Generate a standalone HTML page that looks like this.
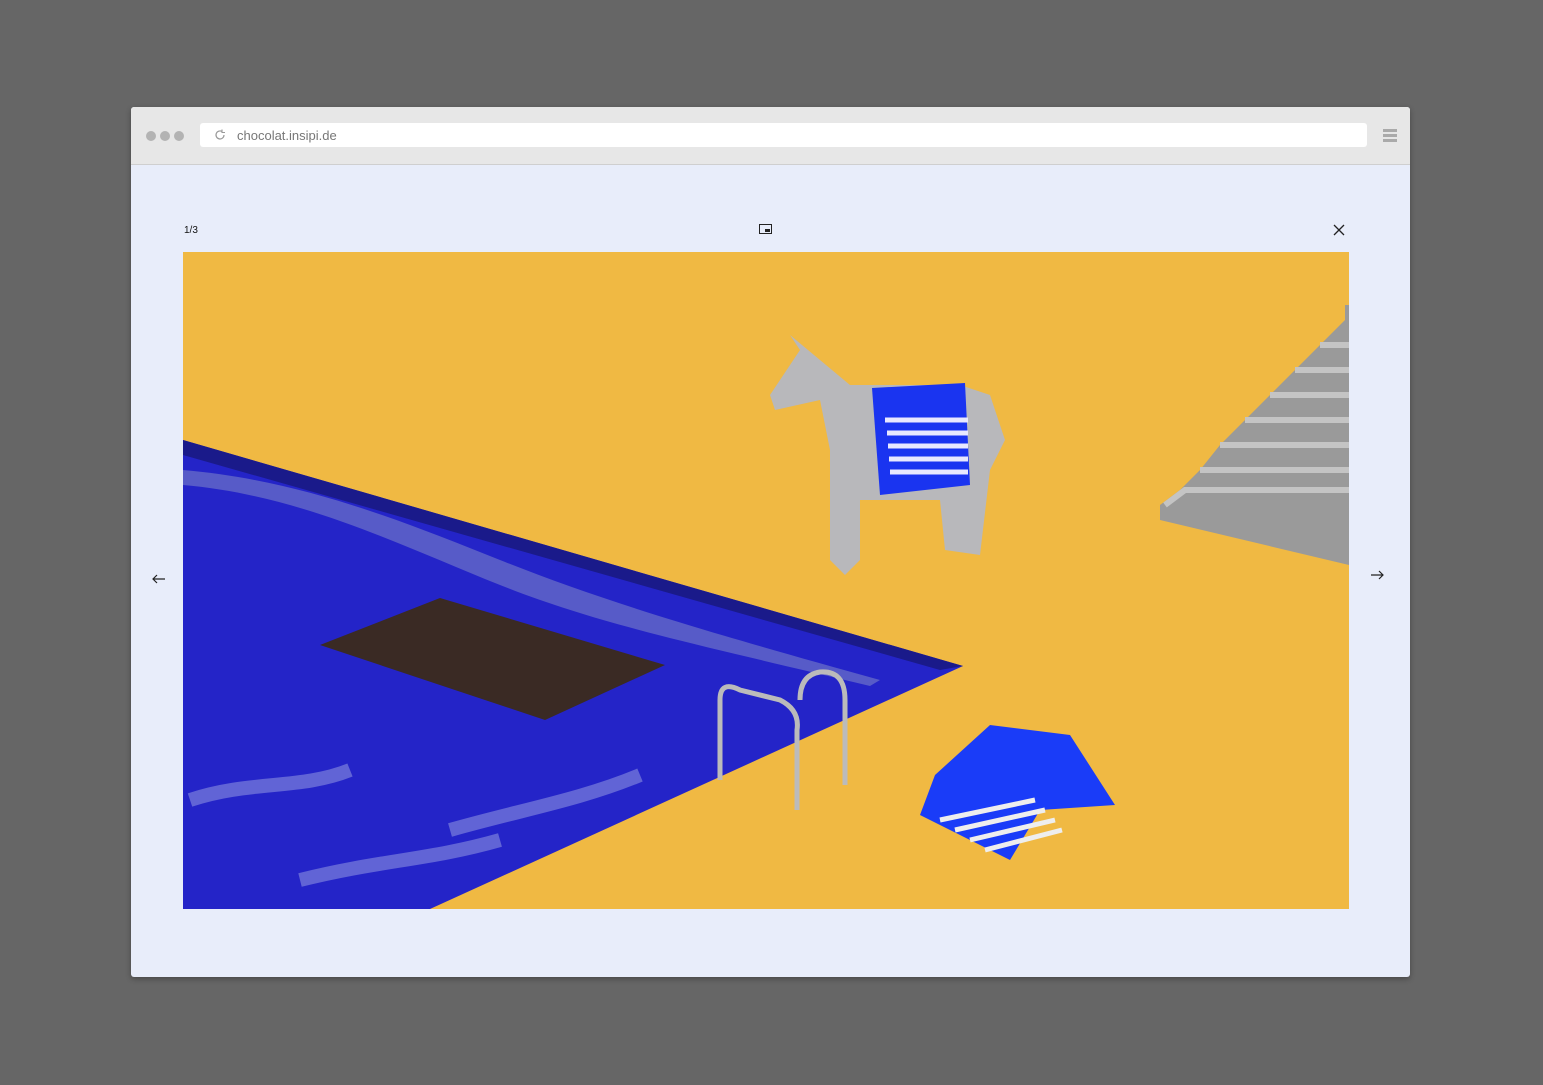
<!DOCTYPE html>
<html><head><meta charset="utf-8"><style>
body{margin:0;width:1543px;height:1085px;background:#666;position:relative;overflow:hidden;font-family:"Liberation Sans",sans-serif}
.win{position:absolute;left:131px;top:107px;width:1279px;height:870px;background:#e8edfa;border-radius:3px;overflow:hidden;box-shadow:0 2px 6px rgba(0,0,0,.3)}
.bar{position:absolute;left:0;top:0;width:100%;height:57px;background:#e7e7e7;border-bottom:1px solid #cfcfcf}
.dot{position:absolute;top:24px;width:10px;height:10px;border-radius:50%;background:#b3b3b3}
.url{position:absolute;left:69px;top:16px;width:1167px;height:24px;background:#fff;border-radius:3px}
.url span{position:absolute;left:37px;top:5px;font-size:13px;color:#777}
.ham{position:absolute;left:1252px;top:22px;width:14px;height:3px;background:#aaa;box-shadow:0 5px 0 #aaa,0 10px 0 #aaa}
.t{position:absolute;font-size:10px;color:#111}
</style></head><body>
<div class="win">
<div class="bar">
<div class="dot" style="left:15px"></div><div class="dot" style="left:29px"></div><div class="dot" style="left:43px"></div>
<div class="url"><svg style="position:absolute;left:14px;top:6px" width="12" height="12" viewBox="0 0 12 12"><path d="M10 6A4 4 0 1 1 8 2.5" fill="none" stroke="#999" stroke-width="1.2"/><path d="M8 0.5V3.5H11" fill="none" stroke="#999" stroke-width="1.1"/></svg><span>chocolat.insipi.de</span></div>
<div class="ham"></div>
</div>
<div class="t" style="left:53px;top:118px">1/3</div>
<svg style="position:absolute;left:628px;top:117px" width="14" height="11"><rect x="0.5" y="0.5" width="12" height="9" fill="none" stroke="#222"/><rect x="6" y="5" width="5" height="3" fill="#222"/></svg>
<svg style="position:absolute;left:1202px;top:117px" width="12" height="12"><path d="M1 1L11 11M11 1L1 11" stroke="#222" stroke-width="1.3"/></svg>
<svg style="position:absolute;left:21px;top:467px" width="14" height="10"><path d="M13 5H1M5 1L1 5L5 9" fill="none" stroke="#222" stroke-width="1.2"/></svg>
<svg style="position:absolute;left:1239px;top:463px" width="14" height="10"><path d="M1 5H13M9 1L13 5L9 9" fill="none" stroke="#222" stroke-width="1.2"/></svg>
<svg style="position:absolute;left:52px;top:145px" width="1166" height="657" viewBox="183 252 1166 657">
<rect x="183" y="252" width="1166" height="657" fill="#f0b943"/>
<polygon points="183,440 963,666 430,909 183,909" fill="#2424c8"/>
<polygon points="183,440 963,666 940,670 183,455" fill="#1a1a8a"/>
<path d="M183,470 C300,480 400,520 500,560 C600,600 700,630 880,680 L870,686 C700,645 600,625 500,585 C400,545 300,495 183,485Z" fill="#7a80c8" opacity=".6"/>
<path d="M190,800 C250,780 300,790 350,770 M450,830 C520,810 580,800 640,775 M300,880 C380,860 430,860 500,840" stroke="#8a90e0" stroke-width="14" fill="none" opacity=".6"/>
<polygon points="320,645 440,598 665,665 545,720" fill="#3a2a24"/>
<path d="M720,780 V700 Q720,680 740,690 L780,700 Q800,710 797,730 V810 M845,785 V700 Q845,670 820,672 Q800,675 800,700" stroke="#bbb" stroke-width="5" fill="none"/>
<polygon points="1160,505 1180,490 1200,470 1220,445 1245,420 1270,395 1295,370 1320,345 1345,320 1345,305 1349,305 1349,565 1160,520" fill="#9a9a9a"/>
<path d="M1165,505L1185,490H1349M1200,470H1349M1220,445H1349M1245,420H1349M1270,395H1349M1295,370H1349M1320,345H1349" stroke="#c4c4c4" stroke-width="6" fill="none"/>
<path d="M790,335 L800,350 L770,395 L775,410 L820,400 L830,450 L830,560 L845,575 L860,560 L860,500 L940,500 L945,550 L980,555 L990,470 L1005,440 L990,395 L960,385 L850,385 Z" fill="#b8b8bb"/>
<polygon points="872,388 965,383 970,485 880,495" fill="#1a34f0"/>
<path d="M885,420H968M887,433H968M888,446H968M889,459H968M890,472H968" stroke="#e8e8ff" stroke-width="5"/>
<polygon points="990,725 1070,735 1115,805 1040,810 1010,860 920,815 935,775" fill="#1a3cf8"/>
<path d="M940,820L1035,800M955,830L1045,810M970,840L1055,820M985,850L1062,830" stroke="#eee" stroke-width="5"/>
</svg>
</div>
</body></html>
